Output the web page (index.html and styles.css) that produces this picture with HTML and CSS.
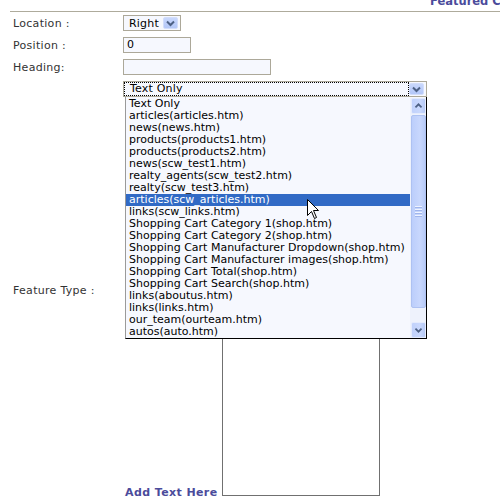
FILE: index.html
```html
<!DOCTYPE html>
<html>
<head>
<meta charset="utf-8">
<link rel="stylesheet" href="styles.css">
</head>
<body>
<div class="header"><div class="title">Featured Content</div></div>
<div class="form">
  <div class="label">Location :</div>
  <div class="ctl">
    <div class="select small">
      <span class="val">Right</span>
      <span class="btn"><svg width="15" height="12" viewBox="0 0 15 12"><path d="M4 4.5 L7.5 8 L11 4.5" fill="none" stroke="#4d6185" stroke-width="2"/></svg></span>
    </div>
  </div>
  <div class="label">Position :</div>
  <div class="ctl"><div class="input pos">0</div></div>
  <div class="label">Heading:</div>
  <div class="ctl"><div class="input head"></div></div>
  <div class="label">Feature Type :</div>
  <div class="ctl">
    <div class="select big">
      <span class="val focus">Text Only</span>
      <span class="btn"><svg width="15" height="12" viewBox="0 0 15 12"><path d="M4 4.5 L7.5 8 L11 4.5" fill="none" stroke="#4d6185" stroke-width="2"/></svg></span>
      <div class="dropdown">
        <ul class="items">
          <li>Text Only</li>
          <li>articles(articles.htm)</li>
          <li>news(news.htm)</li>
          <li>products(products1.htm)</li>
          <li>products(products2.htm)</li>
          <li>news(scw_test1.htm)</li>
          <li>realty_agents(scw_test2.htm)</li>
          <li>realty(scw_test3.htm)</li>
          <li class="sel">articles(scw_articles.htm)</li>
          <li>links(scw_links.htm)</li>
          <li>Shopping Cart Category 1(shop.htm)</li>
          <li>Shopping Cart Category 2(shop.htm)</li>
          <li>Shopping Cart Manufacturer Dropdown(shop.htm)</li>
          <li>Shopping Cart Manufacturer images(shop.htm)</li>
          <li>Shopping Cart Total(shop.htm)</li>
          <li>Shopping Cart Search(shop.htm)</li>
          <li>links(aboutus.htm)</li>
          <li>links(links.htm)</li>
          <li>our_team(ourteam.htm)</li>
          <li>autos(auto.htm)</li>
        </ul>
        <div class="scrollbar">
          <div class="sbtn"><svg width="15" height="16" viewBox="0 0 15 16"><path d="M4 9.5 L7.5 6 L11 9.5" fill="none" stroke="#4d6185" stroke-width="2"/></svg></div>
          <div class="thumb"><span class="grip"></span><span class="grip"></span><span class="grip"></span><span class="grip"></span></div>
          <div class="track"></div>
          <div class="sbtn"><svg width="15" height="16" viewBox="0 0 15 16"><path d="M4 6.5 L7.5 10 L11 6.5" fill="none" stroke="#4d6185" stroke-width="2"/></svg></div>
        </div>
      </div>
    </div>
    <div class="addrow"><span class="addlabel">Add Text Here</span><div class="textarea"></div></div>
  </div>
</div>
<svg class="cursor" width="13" height="21" viewBox="0 0 13 21"><path d="M0.5 0.5 L0.5 16.5 L4.5 12.5 L7.5 19.5 L9.5 18.5 L6.5 11.5 L11.5 11.5 Z" fill="#fff" stroke="#000" stroke-width="1"/></svg>
</body>
</html>
```
FILE: styles.css
```css
html, body {
  margin: 0;
  padding: 0;
  overflow: hidden;
  background: #fff;
}
body {
  font-family: "DejaVu Sans", Verdana, sans-serif;
  font-size: 11px;
  color: #000;
  width: 500px;
  height: 500px;
  position: relative;
}
.header {
  margin-left: 10px;
  height: 11px;
  border-bottom: 1px solid #aeab9c;
  overflow: hidden;
  white-space: nowrap;
}
.title {
  margin-top: -5px;
  padding-left: 420px;
  font-weight: bold;
  font-size: 11.5px;
  line-height: 13px;
  color: #4b4b9b;
}
.form {
  display: grid;
  grid-template-columns: 110px 1fr;
  row-gap: 6px;
  padding: 3px 0 0 13px;
  align-items: center;
}
.label {
  color: #333;
  white-space: nowrap;
  letter-spacing: 0.3px;
}
.select {
  position: relative;
  box-sizing: border-box;
  border: 1px solid #aca899;
  background: #f6f8fe;
  height: 16px;
  display: flex;
  align-items: center;
  justify-content: space-between;
}
.select.small {
  width: 58px;
}
.select.big {
  width: 304px;
}
.val {
  padding-left: 5px;
  line-height: 13px;
  white-space: nowrap;
  letter-spacing: 0.2px;
}
.val.focus {
  box-sizing: border-box;
  height: 14px;
  width: 285px;
  margin-left: 0;
  padding-left: 5px;
  border: 1px dotted #000;
  line-height: 12px;
}
.btn {
  box-sizing: border-box;
  width: 15px;
  height: 12px;
  margin-right: 2px;
  border-radius: 2px;
  background: linear-gradient(#c8d7fc, #b3c7f8);
  border: 1px solid #d2ddfb;
  display: flex;
  align-items: center;
  justify-content: center;
}
.btn svg {
  display: block;
  flex: none;
}
.input {
  box-sizing: border-box;
  height: 16px;
  border: 1px solid #aca899;
  background: #f6f8fe;
  padding-left: 3px;
  line-height: 14px;
}
.input.pos { width: 68px; }
.input.head { width: 148px; }
.dropdown {
  position: absolute;
  top: 15px;
  left: 1px;
  width: 302px;
  box-sizing: border-box;
  border-left: 1px solid #9a9a9a;
  border-right: 1px solid #000;
  border-bottom: 1px solid #000;
  background: #f6f8fe;
  display: flex;
  padding-top: 1px;
  z-index: 2;
}
.items {
  list-style: none;
  margin: 0;
  padding: 0;
  width: 284px;
  color: #000;
}
.items li {
  height: 12px;
  line-height: 12px;
  padding-left: 3px;
  white-space: nowrap;
}
.items li.sel {
  background: #316ac5;
  color: #fff;
}
.scrollbar {
  width: 16px;
  display: flex;
  flex-direction: column;
  background: #eef2fc;
}
.sbtn {
  box-sizing: border-box;
  width: 15px;
  height: 16px;
  margin-left: 1px;
  border-radius: 2px;
  background: linear-gradient(90deg, #c0d1fb, #c9d8fd 60%, #b6c9f6);
  border: 1px solid #e4ebfd;
  display: flex;
  align-items: center;
  justify-content: center;
}
.thumb {
  box-sizing: border-box;
  width: 15px;
  height: 193px;
  margin: 1px 0 0 1px;
  border-radius: 2px;
  background: linear-gradient(90deg, #bccefb, #c8d7fd 60%, #b8cbf8);
  border: 1px solid #aec2f2;
  display: flex;
  flex-direction: column;
  align-items: center;
  justify-content: center;
  gap: 1px;
}
.grip {
  display: block;
  width: 7px;
  height: 1px;
  background: #eef3ff;
  border-bottom: 1px solid #9fb5ec;
}
.track {
  flex: 1;
}
.addrow {
  margin-top: 4px;
  padding-left: 2px;
  white-space: nowrap;
}
.addlabel {
  font-weight: bold;
  color: #4b4b9b;
  letter-spacing: 0.4px;
}
.textarea {
  display: inline-block;
  vertical-align: baseline;
  box-sizing: border-box;
  width: 158px;
  height: 395px;
  margin-left: 4px;
  border: 1px solid #707070;
  background: #fff;
}
.cursor {
  position: absolute;
  left: 307px;
  top: 199px;
  z-index: 5;
}
```
